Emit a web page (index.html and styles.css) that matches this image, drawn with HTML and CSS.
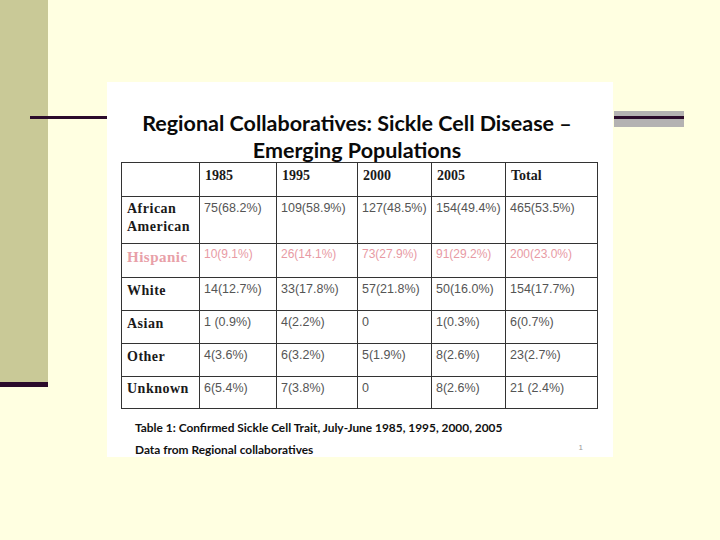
FILE: index.html
```html
<!DOCTYPE html>
<html>
<head>
<meta charset="utf-8">
<link rel="stylesheet" href="styles.css">
</head>
<body>
<div class="picture">
  <h1 class="title">Regional Collaboratives: Sickle Cell Disease –<br>Emerging Populations</h1>
  <table class="data">
    <colgroup>
      <col class="c0"><col class="c1"><col class="c2"><col class="c3"><col class="c4"><col class="c5">
    </colgroup>
    <tr class="r-head">
      <th class="label"></th><th>1985</th><th>1995</th><th class="soft">2000</th><th>2005</th><th>Total</th>
    </tr>
    <tr class="r-tall">
      <th class="label">African<br>American</th><td>75(68.2%)</td><td>109(58.9%)</td><td class="soft">127(48.5%)</td><td>154(49.4%)</td><td>465(53.5%)</td>
    </tr>
    <tr class="r-his">
      <th class="label pink">Hispanic</th><td>10(9.1%)</td><td>26(14.1%)</td><td class="soft">73(27.9%)</td><td>91(29.2%)</td><td>200(23.0%)</td>
    </tr>
    <tr class="r-std">
      <th class="label">White</th><td>14(12.7%)</td><td>33(17.8%)</td><td class="soft">57(21.8%)</td><td>50(16.0%)</td><td>154(17.7%)</td>
    </tr>
    <tr class="r-std">
      <th class="label">Asian</th><td>1 (0.9%)</td><td>4(2.2%)</td><td class="soft">0</td><td>1(0.3%)</td><td>6(0.7%)</td>
    </tr>
    <tr class="r-std">
      <th class="label">Other</th><td>4(3.6%)</td><td>6(3.2%)</td><td class="soft">5(1.9%)</td><td>8(2.6%)</td><td>23(2.7%)</td>
    </tr>
    <tr class="r-last">
      <th class="label">Unknown</th><td>6(5.4%)</td><td>7(3.8%)</td><td class="soft">0</td><td>8(2.6%)</td><td>21 (2.4%)</td>
    </tr>
  </table>
  <p class="caption first">Table 1: Confirmed Sickle Cell Trait, July-June 1985, 1995, 2000, 2005</p>
  <div class="caption-row">
    <p class="caption">Data from Regional collaboratives</p>
    <span class="page-num">1</span>
  </div>
</div>
</body>
</html>
```

FILE: styles.css
```css
html, body {
  margin: 0;
  padding: 0;
}

body {
  width: 720px;
  height: 540px;
  box-sizing: border-box;
  padding: 82px 0 0 107px;
  overflow: hidden;
  background:
    linear-gradient(#2b0b2b, #2b0b2b) 30px 116px / 77px 3px no-repeat,
    linear-gradient(#2b0b2b, #2b0b2b) 0 382px / 48px 5px no-repeat,
    linear-gradient(#c9c997, #c9c997) 0 0 / 48px 382px no-repeat,
    linear-gradient(#2b0b2b, #2b0b2b) 614px 116px / 70px 3px no-repeat,
    linear-gradient(#b4b2b2, #b4b2b2) 614px 111px / 70px 16px no-repeat,
    #ffffe1;
}

.picture {
  width: 506px;
  height: 375px;
  background: #ffffff;
  box-sizing: border-box;
  padding: 28px 16px 0 14px;
}

.title {
  margin: 0;
  font-family: "Lato", "Liberation Sans", sans-serif;
  font-weight: 700;
  font-size: 21.5px;
  line-height: 27px;
  text-align: center;
  color: #0a0a0a;
  padding-left: 4px;
  padding-right: 8px;
  height: 52px;
  white-space: nowrap;
}

.data {
  border-collapse: collapse;
  width: 476px;
  table-layout: fixed;
  border: 1px solid #333;
}

.c0 { width: 78px; }
.c1 { width: 77px; }
.c2 { width: 81px; }
.c3 { width: 74px; }
.c4 { width: 74px; }
.c5 { width: 92px; }

.data th,
.data td {
  border: 1px solid #333;
  vertical-align: top;
  text-align: left;
  padding: 0;
}

.data th {
  font-family: "Liberation Serif", "Times New Roman", serif;
  font-weight: 700;
  font-size: 14px;
  line-height: 18px;
  color: #1a1a1a;
  padding: 3px 0 0 5px;
}

.data th.label {
  padding-left: 5px;
  letter-spacing: 0.5px;
}

.data td {
  font-family: "Liberation Sans", Arial, sans-serif;
  font-size: 12.5px;
  line-height: 16px;
  color: #555;
  padding: 3px 0 0 4px;
  white-space: nowrap;
}

.data .soft {
  border-left-color: #999;
}

.r-head { height: 34px; }
.r-tall { height: 47px; }
.r-his { height: 34px; }
.r-std { height: 33px; }
.r-last { height: 32px; }

.r-head th { padding-top: 4px; }
.r-std th { padding-top: 4px; }
.r-last th { padding-top: 3px; }
.r-tall th { padding-top: 3px; }

.r-his th.pink {
  color: #e8a0a8;
  font-size: 15px;
  padding-top: 4px;
}

.r-his td {
  color: #e89aa4;
  font-size: 12px;
  padding-top: 2px;
}

.caption {
  margin: 0;
  font-family: "Lato", "Liberation Sans", sans-serif;
  font-weight: 700;
  font-size: 11.9px;
  line-height: 14px;
  color: #111;
  white-space: nowrap;
}

.caption.first {
  margin-top: 12px;
  padding-left: 14px;
}

.caption-row {
  display: flex;
  justify-content: space-between;
  align-items: flex-end;
  margin-top: 8px;
  padding-left: 14px;
}

.page-num {
  font-family: "Liberation Sans", Arial, sans-serif;
  font-size: 8px;
  color: #999;
  margin-right: 14px;
  margin-bottom: 5px;
}
```
